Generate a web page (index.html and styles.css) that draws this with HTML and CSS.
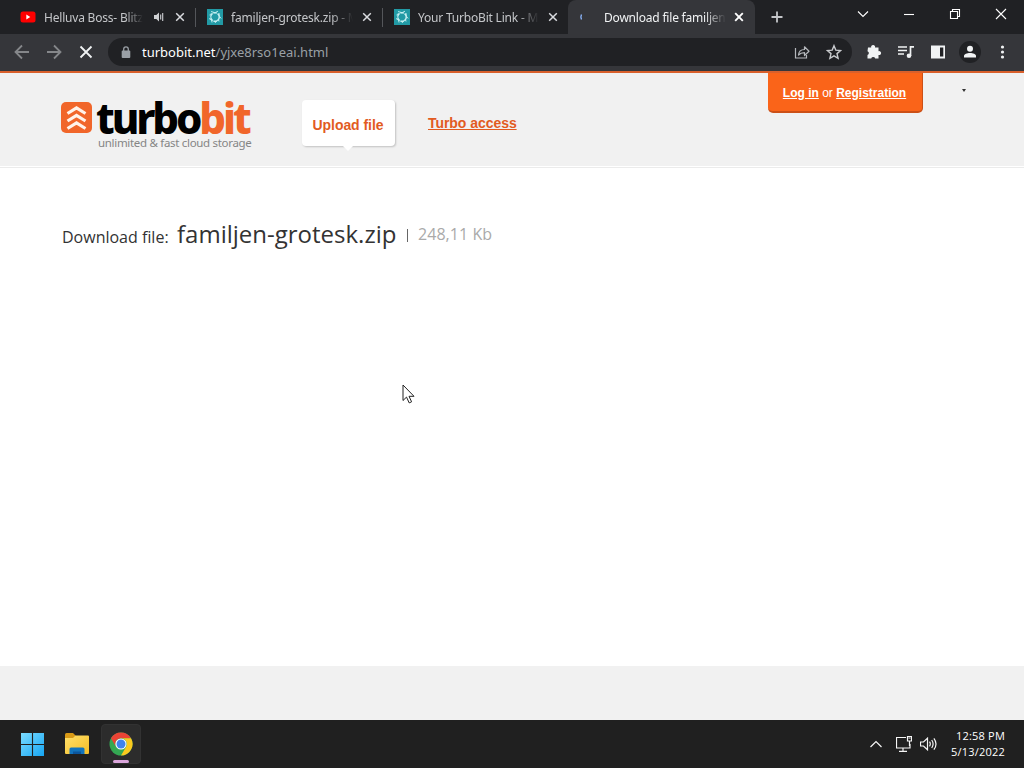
FILE: index.html
```html
<!DOCTYPE html>
<html lang="en">
<head>
    <meta charset="UTF-8">
    <meta name="viewport" content="width=device-width, initial-scale=1.0">
    <title>Download file familjen-grotesk.zip</title>
    <link rel="stylesheet" href="styles.css">
</head>
<body>
    <!-- Browser tabs -->
    <div class="tab-strip">
        <div class="tab">
            <svg class="favicon" viewBox="0 0 16 16"><rect x="0.5" y="2.5" width="15" height="11" rx="2.5" fill="#f00"/><path d="M6.3 5.5v5l4-2.5z" fill="#fff"/></svg>
            <span class="tab-title with-audio">Helluva Boss- Blitz-</span>
            <svg class="audio" viewBox="0 0 12 12"><path d="M1 4h2.300L6 1.500v9L3.300 8H1z" fill="#cfd1d4"/><path d="M7.700 3.500v5M9.700 2v8" stroke="#cfd1d4" stroke-width="1.100"/></svg>
            <svg class="close" viewBox="0 0 10 10"><path d="M1.200 1.200l7.600 7.600M8.800 1.200L1.200 8.800"/></svg>
        </div>
        <div class="tab">
            <svg class="favicon" viewBox="0 0 16 16"><rect width="16" height="16" fill="#229aa5"/><circle cx="8" cy="8" r="4.300" fill="none" stroke="#c5eef1" stroke-width="1.500" stroke-dasharray="3.700 0.800"/><path d="M4 2.500l4 1.200 3-1.500M12 4l.2 3 2 2.500M12.500 12l-2.500-.7L8 14M5 13.500l-.5-2.500L2 9.500M2.500 6l2-1.500" fill="none" stroke="#c5eef1" stroke-width="0.900"/></svg>
            <span class="tab-title">familjen-grotesk.zip - M</span>
            <svg class="close" viewBox="0 0 10 10"><path d="M1.200 1.200l7.600 7.600M8.800 1.200L1.200 8.800"/></svg>
        </div>
        <div class="tab">
            <svg class="favicon" viewBox="0 0 16 16"><rect width="16" height="16" fill="#229aa5"/><circle cx="8" cy="8" r="4.300" fill="none" stroke="#c5eef1" stroke-width="1.500" stroke-dasharray="3.700 0.800"/><path d="M4 2.500l4 1.200 3-1.500M12 4l.2 3 2 2.500M12.500 12l-2.500-.7L8 14M5 13.500l-.5-2.500L2 9.500M2.500 6l2-1.500" fill="none" stroke="#c5eef1" stroke-width="0.900"/></svg>
            <span class="tab-title">Your TurboBit Link - M</span>
            <svg class="close" viewBox="0 0 10 10"><path d="M1.200 1.200l7.600 7.600M8.800 1.200L1.200 8.800"/></svg>
        </div>
        <div class="tab active">
            <svg class="favicon" viewBox="0 0 16 16"><path d="M2.500 5.500q-1.300 2.500 0 5" fill="none" stroke="#8ab4f8" stroke-width="1.400"/></svg>
            <span class="tab-title">Download file familjen-</span>
            <svg class="close" viewBox="0 0 10 10"><path d="M1.200 1.200l7.600 7.600M8.800 1.200L1.200 8.800"/></svg>
        </div>
        <svg class="new-tab" viewBox="0 0 12 12"><path d="M6 0.500v11M0.500 6h11" stroke="#c4c6c9" stroke-width="1.800"/></svg>
        <div class="window-buttons">
            <svg viewBox="0 0 12 12"><path d="M1 3.500l5 5 5-5"/></svg>
            <svg viewBox="0 0 12 12"><path d="M1 6.500h10"/></svg>
            <svg viewBox="0 0 12 12"><path d="M1.500 3.500h7v7h-7zM3.500 3.500v-2h7v7h-2"/></svg>
            <svg viewBox="0 0 12 12"><path d="M1 1l10 10M11 1L1 11"/></svg>
        </div>
    </div>

    <!-- Address bar -->
    <div class="toolbar">
        <svg class="nav-icon dim" viewBox="0 0 16 16"><path d="M15 8H1.500M8 1.500L1.500 8 8 14.500"/></svg>
        <svg class="nav-icon dim" viewBox="0 0 16 16"><path d="M1 8h13.500M8 1.500L14.500 8 8 14.500"/></svg>
        <svg class="nav-icon" viewBox="0 0 16 16"><path d="M2.500 2.500l11 11M13.500 2.500l-11 11"/></svg>
        <div class="omnibox">
            <svg class="lock" viewBox="0 0 10 13"><rect x="0.700" y="4.500" width="8.600" height="7.500" rx="1" fill="#9aa0a6"/><path d="M2.700 5V3.200a2.300 2.300 0 0 1 4.600 0V5" fill="none" stroke="#9aa0a6" stroke-width="1.300"/></svg>
            <span class="url"><span class="host">turbobit.net</span>/yjxe8rso1eai.html</span>
            <svg class="bar-icon" viewBox="0 0 16 16"><path d="M1.500 4v10h11v-3" fill="none" stroke="#b5b8bc" stroke-width="1.200"/><path d="M4.500 11c.3-3.800 2.500-5.500 6-5.500V2.800l4.500 4.400-4.500 4.300V8.700c-2.700 0-4.500.6-6 2.300z" fill="none" stroke="#b5b8bc" stroke-width="1.200" stroke-linejoin="round"/></svg>
            <svg class="bar-icon" viewBox="0 0 16 16"><path d="M8 1.700l1.800 4.400 4.800.4-3.600 3.100 1.100 4.700L8 11.800l-4.100 2.500L5 9.600 1.400 6.500l4.800-.4z" fill="none" stroke="#c8cacd" stroke-width="1.400"/></svg>
        </div>
        <div class="extensions">
            <svg viewBox="0 0 16 16"><path d="M2 3.500h3.200a2 2 0 1 1 3.800 0h3.500v3.700a2 2 0 1 1 0 3.800v3.500H9.200a2.100 2.100 0 0 0-4 0H1.500V11a2 2 0 0 0 0-3.800z" fill="#f1f3f4"/></svg>
            <svg viewBox="0 0 16 16"><path d="M0 3h9M0 6.500h9M0 10h6M12.500 12V2.800H16" fill="none" stroke="#f1f3f4" stroke-width="1.700"/><circle cx="11" cy="11.700" r="2.300" fill="#f1f3f4"/></svg>
            <svg viewBox="0 0 16 16"><path d="M1 1.500h14v13H1z" fill="#f1f3f4"/><path d="M3 3.500h6.500v9H3z" fill="#f1f3f4"/><path d="M10 3.500h3.300v9H10z" fill="#202124"/></svg>
            <svg class="avatar" viewBox="0 0 22 22"><circle cx="11" cy="11" r="11" fill="#202124"/><circle cx="11" cy="7.800" r="3" fill="#f1f3f4"/><path d="M5 16.500v-1.500c0-2 3-3 6-3s6 1 6 3v1.500z" fill="#f1f3f4"/></svg>
            <svg viewBox="0 0 16 16"><g fill="#f1f3f4"><circle cx="8.500" cy="3" r="1.600"/><circle cx="8.500" cy="8" r="1.600"/><circle cx="8.500" cy="13" r="1.600"/></g></svg>
        </div>
    </div>

    <!-- Site header -->
    <header class="site-header">
        <div class="logo">
            <svg class="logo-mark" viewBox="0 0 31 31"><rect width="31" height="31" rx="5" fill="#f1662a"/><path d="M6.500 11.500l9-5.500 9 5.500M6.500 19l9-5.500 9 5.500M6.500 26.500l9-5.500 9 5.500" fill="none" stroke="#fff3ea" stroke-width="3.200"/></svg>
            <div class="logo-text">
                <div class="logo-name">turbo<span>bit</span></div>
                <div class="slogan">unlimited &amp; fast cloud storage</div>
            </div>
        </div>
        <nav class="menu">
            <a class="menu-upload">Upload file</a>
            <a class="menu-turbo">Turbo access</a>
        </nav>
        <div class="login"><a>Log in</a> or <a>Registration</a></div>
        <div class="lang-arrow"></div>
    </header>

    <main class="content">
        <div class="file-line">
            <span class="file-label">Download file:</span>
            <span class="file-name">familjen-grotesk.zip</span>
            <span class="file-sep"></span>
            <span class="file-size">248,11 Kb</span>
        </div>
        <svg class="cursor" viewBox="0 0 13 20"><path d="M1 1v15.500l3.500-3.400 2.700 5.800 2.400-1.100-2.600-5.500h5z" fill="#fff" stroke="#222" stroke-width="1"/></svg>
    </main>
    <footer class="site-footer"></footer>

    <!-- Taskbar -->
    <div class="taskbar">
        <svg class="start" viewBox="0 0 24 24"><defs><linearGradient id="win" x1="0" y1="0" x2="24" y2="24" gradientUnits="userSpaceOnUse"><stop offset="0" stop-color="#7bdcff"/><stop offset="1" stop-color="#16a5f3"/></linearGradient></defs><path d="M0 0h11.400v11.400H0zM12.600 0H24v11.400H12.600zM0 12.600h11.400V24H0zM12.600 12.600H24V24H12.600z" fill="url(#win)"/></svg>
        <svg class="explorer" viewBox="0 0 24 22"><defs><linearGradient id="folder" x1="0" y1="0" x2="1" y2="1"><stop offset="0" stop-color="#ffe06b"/><stop offset="1" stop-color="#f5bd25"/></linearGradient></defs><path d="M0 1.500Q0 0 1.500 0H8l2.500 2.500V7H0z" fill="#d99a16"/><path d="M0 5h8l2.500-2.500H23q1 0 1 1V20q0 1-1 1H1q-1 0-1-1z" fill="url(#folder)"/><path d="M4.500 21v-5q0-1.500 1.500-1.500h12q1.500 0 1.500 1.500v5z" fill="#1274bd"/><path d="M8 21v-2.500h8V21z" fill="#0b559c"/></svg>
        <div class="task-active">
            <svg class="chrome" viewBox="0 0 24 24"><circle cx="12" cy="12" r="11.500" fill="#34a853"/><path d="M2 6.250A11.500 11.500 0 0 1 22 6.250H12A5.700 5.700 0 0 0 7 14.900z" fill="#ea4335"/><path d="M22 6.250A11.500 11.500 0 0 1 12 23.500l5-8.600a5.700 5.700 0 0 0-5-8.650z" fill="#fbc91e"/><circle cx="12" cy="12" r="5.600" fill="#fff"/><circle cx="12" cy="12" r="4.500" fill="#3f83ee"/></svg>
            <div class="task-mark"></div>
        </div>
        <div class="tray">
            <svg class="chevron" viewBox="0 0 12 8"><path d="M0.500 7L6 1.500 11.500 7"/></svg>
            <svg class="network" viewBox="0 0 16 16"><path d="M10 1.500H.5v10.500h13.500V8M3 15.300h8M7 12v3M11.500.5h4v4.500h-4zM13.500 5v5M12.500 2h2"/></svg>
            <svg class="volume" viewBox="0 0 17 14"><path d="M.5 5h3L7.500 1.200v11.600L3.500 9H.5zM9.500 4.700q1.600 2.300 0 4.600M11.700 3q2.800 4 0 8M13.900 1.300q4.200 5.700 0 11.400"/></svg>
            <div class="clock"><div class="time">12:58 PM</div><div class="date">5/13/2022</div></div>
        </div>
    </div>
</body>
</html>
```
FILE: styles.css
```css
/* Base styles */
* {
    box-sizing: border-box;
}

body {
    margin: 0;
    width: 1024px;
    height: 768px;
    overflow: hidden;
    display: flex;
    flex-direction: column;
    background-color: #fff;
    font-family: 'Liberation Sans', Arial, sans-serif;
}

svg {
    display: block;
    flex-shrink: 0;
}

/* Tabs */
.tab-strip {
    height: 34px;
    flex-shrink: 0;
    display: flex;
    align-items: center;
    padding-left: 9px;
    background-color: #202124;
    font-family: 'Noto Sans', sans-serif;
    font-size: 12px;
    color: #c4c6c9;
}

.tab {
    width: 187px;
    height: 34px;
    display: flex;
    align-items: center;
    padding: 0 10px 0 11px;
    background: linear-gradient(#54565a, #54565a) right 8px / 1px 19px no-repeat;
}

.tab:nth-child(3) {
    background: none;
    width: 185px;
}

.tab.active {
    background: #35363a;
    border-radius: 8px 8px 0 0;
    color: #f1f3f4;
}

.favicon {
    width: 16px;
    height: 16px;
}

.tab-title {
    width: 122px;
    margin: 0 9px 0 8px;
    white-space: nowrap;
    letter-spacing: -0.2px;
    -webkit-mask-image: linear-gradient(90deg, #000 82%, transparent);
    mask-image: linear-gradient(90deg, #000 82%, transparent);
}

.tab-title.with-audio {
    width: 99px;
    margin-right: 10px;
}

.active .tab-title {
    margin: 0 8px 0 9px;
}

.audio {
    width: 12px;
    height: 12px;
    margin-right: 10px;
}

.close {
    width: 10px;
    height: 10px;
    fill: none;
    stroke: #dadce0;
    stroke-width: 1.5;
}

.active .close {
    stroke: #fff;
    stroke-width: 1.9;
}

.new-tab {
    width: 12px;
    height: 12px;
    margin-left: 16px;
}

.window-buttons {
    display: flex;
    gap: 34px;
    margin: 0 17px 6px auto;
}

.window-buttons svg {
    width: 12px;
    height: 12px;
    fill: none;
    stroke: #fff;
    stroke-width: 1.1;
}

/* Toolbar */
.toolbar {
    height: 37px;
    flex-shrink: 0;
    display: flex;
    align-items: center;
    padding: 0 0 1px 14px;
    background-color: #35363a;
}

.nav-icon {
    width: 16px;
    height: 16px;
    margin-right: 16px;
    fill: none;
    stroke: #f1f3f4;
    stroke-width: 1.8;
}

.nav-icon.dim {
    stroke: #85878a;
}

.omnibox {
    width: 744px;
    height: 28px;
    margin-left: -2px;
    padding: 0 10px 0 13px;
    display: flex;
    align-items: center;
    background-color: #202124;
    border-radius: 14px;
}

.lock {
    width: 10px;
    height: 13px;
    margin-right: 11px;
}

.url {
    flex: 1;
    font-family: 'Noto Sans', sans-serif;
    font-size: 13px;
    color: #9aa0a6;
}

.host {
    color: #fff;
}

.bar-icon {
    width: 16px;
    height: 16px;
    margin-left: 16px;
}

.extensions {
    display: flex;
    align-items: center;
    gap: 16px;
    margin-left: 14px;
}

.extensions svg {
    width: 16px;
    height: 16px;
}

.extensions .avatar {
    width: 22px;
    height: 22px;
    margin: 0 -3px;
}

/* Site header */
.site-header {
    height: 97px;
    flex-shrink: 0;
    display: flex;
    align-items: flex-start;
    padding-left: 61px;
    border-top: 2px solid #d9602c;
    background: linear-gradient(#f1f1f1 93px, #fff 93px, #fff 94px, #ebebeb 94px);
}

.logo {
    width: 241px;
    display: flex;
    padding-top: 29px;
}

.logo-mark {
    width: 31px;
    height: 31px;
}

.logo-text {
    margin-left: 4px;
}

.logo-name {
    height: 32px;
    font-family: 'Noto Sans', sans-serif;
    font-size: 42px;
    font-weight: 800;
    line-height: 31px;
    letter-spacing: -3.1px;
    color: #000;
    white-space: nowrap;
}

.logo-name span {
    color: #f1662a;
}

.slogan {
    margin-left: 2px;
    font-family: 'Noto Sans', sans-serif;
    font-size: 11.5px;
    line-height: 18px;
    letter-spacing: -0.31px;
    color: #858585;
    white-space: nowrap;
}

.menu {
    display: flex;
    width: 466px;
    font-size: 14px;
    font-weight: bold;
    letter-spacing: -0.05px;
    color: #e25b1f;
}

.menu-upload {
    position: relative;
    width: 93px;
    height: 46px;
    margin-top: 27px;
    padding-right: 1px;
    line-height: 51px;
    text-align: center;
    background-color: #fff;
    border-radius: 4px;
    box-shadow: 1px 1px 2px rgba(0, 0, 0, 0.2);
}

/* speech bubble tip */
.menu-upload::after {
    content: '';
    position: absolute;
    left: 41px;
    bottom: -5px;
    border: 5px solid transparent;
    border-top-color: #fff;
    border-bottom: 0;
}

.menu-turbo {
    margin: 42px 0 0 33px;
    text-decoration: underline;
}

.login {
    width: 155px;
    height: 40px;
    line-height: 40px;
    padding-right: 1px;
    text-align: center;
    font-size: 12px;
    color: #fff;
    background-color: #fa6419;
    border-radius: 0 0 5px 5px;
    border-right: 1px solid #cc5017;
    border-bottom: 2px solid #cc5017;
}

.login a {
    font-weight: bold;
    text-decoration: underline;
}

.lang-arrow {
    margin: 16px 0 0 39px;
    border: 2px solid transparent;
    border-top: 3px solid #333;
    border-bottom: 0;
}

/* Download block */
.content {
    position: relative;
    flex: 1;
    padding: 49px 0 0 62px;
}

.file-line {
    display: flex;
    align-items: baseline;
    font-family: 'Open Sans', sans-serif;
    color: #333;
    white-space: nowrap;
}

.file-label {
    width: 115px;
    font-size: 16px;
}

.file-name {
    width: 230px;
    font-size: 24px;
}

.file-sep {
    width: 1px;
    height: 13px;
    margin: 3px 11px 0 0;
    background-color: #666;
    align-self: center;
}

.file-size {
    margin-left: -1px;
    font-size: 16px;
    letter-spacing: 0.05px;
    color: #aaa;
    align-self: center;
}

.cursor {
    position: absolute;
    left: 402px;
    top: 216px;
    width: 13px;
    height: 20px;
}

.site-footer {
    height: 54px;
    flex-shrink: 0;
    background-color: #f1f1f1;
}

/* Taskbar */
.taskbar {
    height: 48px;
    flex-shrink: 0;
    display: flex;
    align-items: center;
    padding: 0 19px 0 21px;
    background-color: #202020;
}

.start {
    width: 23px;
    height: 23px;
    margin-right: 21px;
}

.explorer {
    width: 24px;
    height: 22px;
    margin-right: 12px;
}

.task-active {
    width: 40px;
    height: 40px;
    display: flex;
    flex-direction: column;
    align-items: center;
    background-color: #2c2c2c;
    border: 1px solid #323232;
    border-radius: 4px;
}

.chrome {
    width: 24px;
    height: 24px;
    margin-top: 7px;
}

.task-mark {
    width: 16px;
    height: 3px;
    margin-top: 4px;
    border-radius: 2px;
    background-color: #dba6dc;
}

.tray {
    display: flex;
    align-items: center;
    margin-left: auto;
}

.tray svg {
    fill: none;
    stroke: #f5f5f5;
    stroke-width: 1.2;
}

.chevron {
    width: 12px;
    height: 8px;
    margin-right: 14px;
}

.network {
    width: 16px;
    height: 16px;
    margin-right: 8px;
}

.volume {
    width: 17px;
    height: 14px;
    margin-right: 14px;
}

.clock {
    font-family: 'Open Sans', sans-serif;
    font-size: 11px;
    line-height: 16px;
    letter-spacing: 0.2px;
    text-align: right;
    color: #fff;
    white-space: nowrap;
}
```
